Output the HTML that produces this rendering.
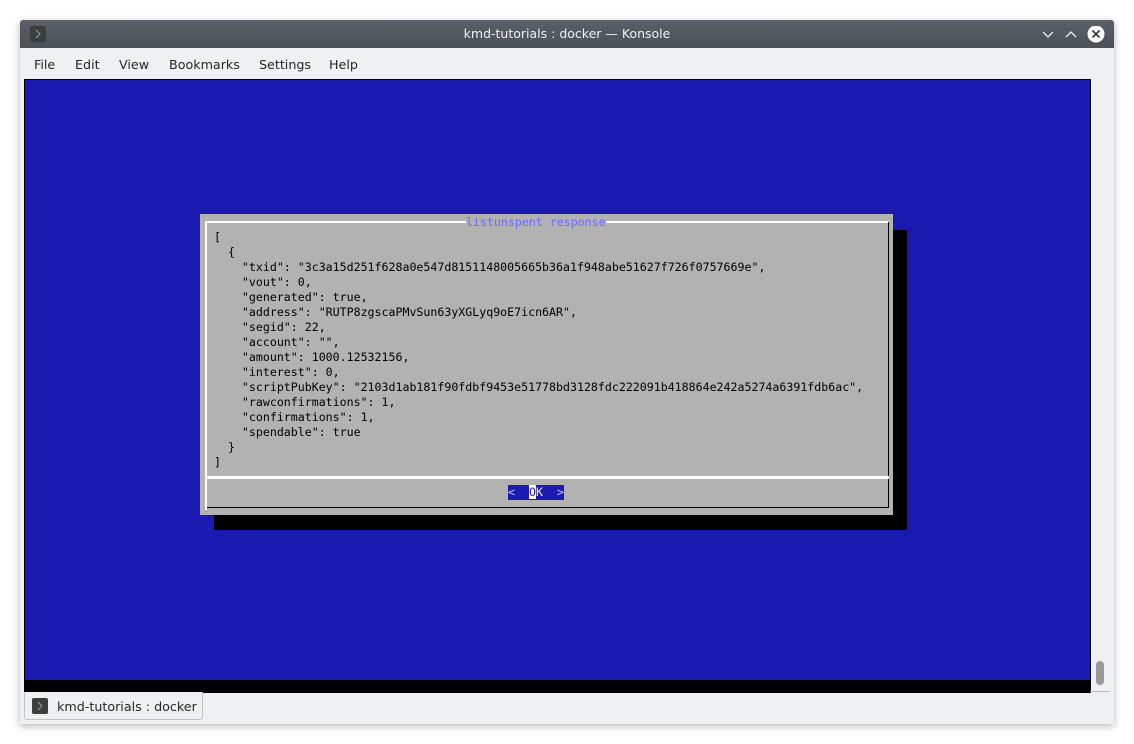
<!DOCTYPE html>
<html><head><meta charset="utf-8"><style>
html,body{margin:0;padding:0;width:1134px;height:744px;background:#fff;overflow:hidden;position:relative}
div{position:absolute;box-sizing:border-box}
.ui{font-family:"DejaVu Sans","Liberation Sans",sans-serif;font-size:12.7px;color:#232629}
.mono{font-family:"DejaVu Sans Mono","Liberation Mono",monospace;font-size:11.6px;white-space:pre;line-height:15px;color:#000}
</style></head><body>
<div style="left:20px;top:20px;width:1094px;height:704px;background:#eff0f1;box-shadow:0 2px 8px rgba(0,0,0,.3);border-radius:3px 3px 0 0"></div>
<!-- title bar -->
<div style="left:20px;top:20px;width:1094px;height:28px;background:linear-gradient(#5a6067,#4b5157);border-radius:3px 3px 0 0"></div>
<div style="left:30px;top:26px;width:16px;height:16px;background:#3a3f3d;border-radius:2px"></div>
<svg style="position:absolute;left:30px;top:26px" width="16" height="16"><path d="M6 4l4 4-4 4" stroke="#9aa0a0" fill="none" stroke-width="1"/></svg>
<div class="ui" style="left:20px;top:26px;width:1094px;text-align:center;color:#eff0f1;font-size:12.5px">kmd-tutorials : docker — Konsole</div>
<svg style="position:absolute;left:1040px;top:26px" width="70" height="18">
<path d="M3 6l5 5 5-5" stroke="#eff0f1" fill="none" stroke-width="1.3"/>
<path d="M26 11l5-5 5 5" stroke="#eff0f1" fill="none" stroke-width="1.3"/>
<circle cx="56" cy="8" r="8.5" fill="#fcfcfc"/>
<path d="M52.5 4.5l7 7M59.5 4.5l-7 7" stroke="#31363b" stroke-width="1.6"/>
</svg>
<!-- menu -->
<div class="ui" style="left:34px;top:57px">File</div>
<div class="ui" style="left:75px;top:57px">Edit</div>
<div class="ui" style="left:119px;top:57px">View</div>
<div class="ui" style="left:169px;top:57px">Bookmarks</div>
<div class="ui" style="left:259px;top:57px">Settings</div>
<div class="ui" style="left:329px;top:57px">Help</div>
<!-- terminal -->
<div style="left:24px;top:79px;width:1067px;height:614px;background:#000;"></div>
<div style="left:25px;top:80px;width:1065px;height:600px;background:#1a1ab0"></div>
<div style="left:1096px;top:661px;width:8px;height:24px;background:#999;border-radius:4px"></div>
<div style="left:1090px;top:691px;width:20px;height:1px;background:#bbb"></div>
<!-- dialog shadow -->
<div style="left:214px;top:230px;width:693px;height:300px;background:#000"></div>
<div style="left:200px;top:214px;width:693px;height:301px;background:#b2b2b2"></div>
<div style="left:205px;top:221px;width:684px;height:2px;background:#fff"></div>
<div style="left:205px;top:221px;width:2px;height:289px;background:#fff"></div>
<div style="left:888px;top:222px;width:1px;height:286px;background:#000"></div>
<div style="left:205px;top:476px;width:684px;height:3px;background:#fff"></div>
<div style="left:207px;top:507px;width:682px;height:1px;background:#000"></div>
<div class="mono" style="left:466px;top:215px;background:#b2b2b2;color:#6b6bff">listunspent response</div>
<div class="mono" style="left:214px;top:230px">[
  {
    "txid": "3c3a15d251f628a0e547d8151148005665b36a1f948abe51627f726f0757669e",
    "vout": 0,
    "generated": true,
    "address": "RUTP8zgscaPMvSun63yXGLyq9oE7icn6AR",
    "segid": 22,
    "account": "",
    "amount": 1000.12532156,
    "interest": 0,
    "scriptPubKey": "2103d1ab181f90fdbf9453e51778bd3128fdc222091b418864e242a5274a6391fdb6ac",
    "rawconfirmations": 1,
    "confirmations": 1,
    "spendable": true
  }
]</div>
<div class="mono" style="left:508px;top:485px;width:56px;height:15px;background:#1a1ab0;color:#c8c8ff">&lt;  <span style="background:#fff;color:#1a1ab0">O</span><span style="color:#ffff60">K</span>  &gt;</div>
<!-- tab -->
<div style="left:24px;top:692px;width:179px;height:28px;background:#eff0f1;border:1px solid #c0c2c4;border-top:none;border-radius:0 0 3px 3px"></div>
<div style="left:32px;top:698px;width:16px;height:16px;background:#3a3f3d;border-radius:2px"></div>
<svg style="position:absolute;left:32px;top:698px" width="16" height="16"><path d="M6 4l4 4-4 4" stroke="#9aa0a0" fill="none" stroke-width="1"/></svg>
<div class="ui" style="left:57px;top:699px">kmd-tutorials : docker</div>
</body></html>
